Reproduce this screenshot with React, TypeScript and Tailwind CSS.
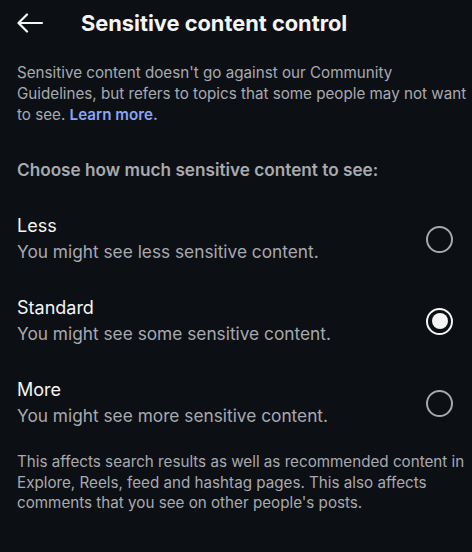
import React from "react";

const options = [
  { title: "Less", sub: "You might see less sensitive content.", selected: false },
  { title: "Standard", sub: "You might see some sensitive content.", selected: true },
  { title: "More", sub: "You might see more sensitive content.", selected: false },
];

function Radio({ selected }: { selected: boolean }) {
  if (selected) {
    return (
      <div className="w-[27px] h-[27px] rounded-full border-[2.5px] border-[#f5f5f5] flex items-center justify-center">
        <div className="w-[16px] h-[16px] rounded-full bg-[#f5f5f5]" />
      </div>
    );
  }
  return <div className="w-[27px] h-[27px] rounded-full border-2 border-[#a8a8a8]" />;
}

export default function App() {
  return (
    <div
      className="w-[472px] h-[552px] bg-[#0c1014] text-[#f5f5f5] overflow-hidden"
      style={{ fontFamily: "Inter, 'Noto Sans', sans-serif" }}
    >
      <div className="flex items-center h-[46px] pl-[16px]">
        <svg width="28" height="20" viewBox="0 0 28 20" fill="none" stroke="#f5f5f5" strokeWidth="2.2" strokeLinecap="round" strokeLinejoin="round">
          <path d="M26 10H2.5M11 1.5L2.5 10l8.5 8.5" />
        </svg>
        <h1 className="ml-[37px] text-[21.8px] font-bold">Sensitive content control</h1>
      </div>
      <p className="pl-[17px] mt-[16px] text-[15.2px] leading-[21px] text-[#a8aab0] whitespace-nowrap">
        Sensitive content doesn't go against our Community
        <br />
        Guidelines, but refers to topics that some people may not want
        <br />
        to see. <span className="text-[#8aa4f7] font-semibold">Learn more.</span>
      </p>
      <p className="px-[17px] mt-[33px] text-[17.2px] leading-[24px] font-semibold text-[#a8aab0]">
        Choose how much sensitive content to see:
      </p>
      <div className="mt-[31px] flex flex-col gap-[30px]">
        {options.map((o) => (
          <div key={o.title} className="flex items-center justify-between pl-[17px] pr-[19px]">
            <div className="flex flex-col">
              <span className="text-[18px] leading-[26px] text-[#f5f5f5]">{o.title}</span>
              <span className="text-[17.3px] leading-[26px] text-[#a8aab0]">{o.sub}</span>
            </div>
            <Radio selected={o.selected} />
          </div>
        ))}
      </div>
      <p className="pl-[17px] mt-[23px] text-[15.2px] leading-[20.5px] text-[#a8aab0] whitespace-nowrap">
        This affects search results as well as recommended content in
        <br />
        Explore, Reels, feed and hashtag pages. This also affects
        <br />
        comments that you see on other people's posts.
      </p>
    </div>
  );
}
